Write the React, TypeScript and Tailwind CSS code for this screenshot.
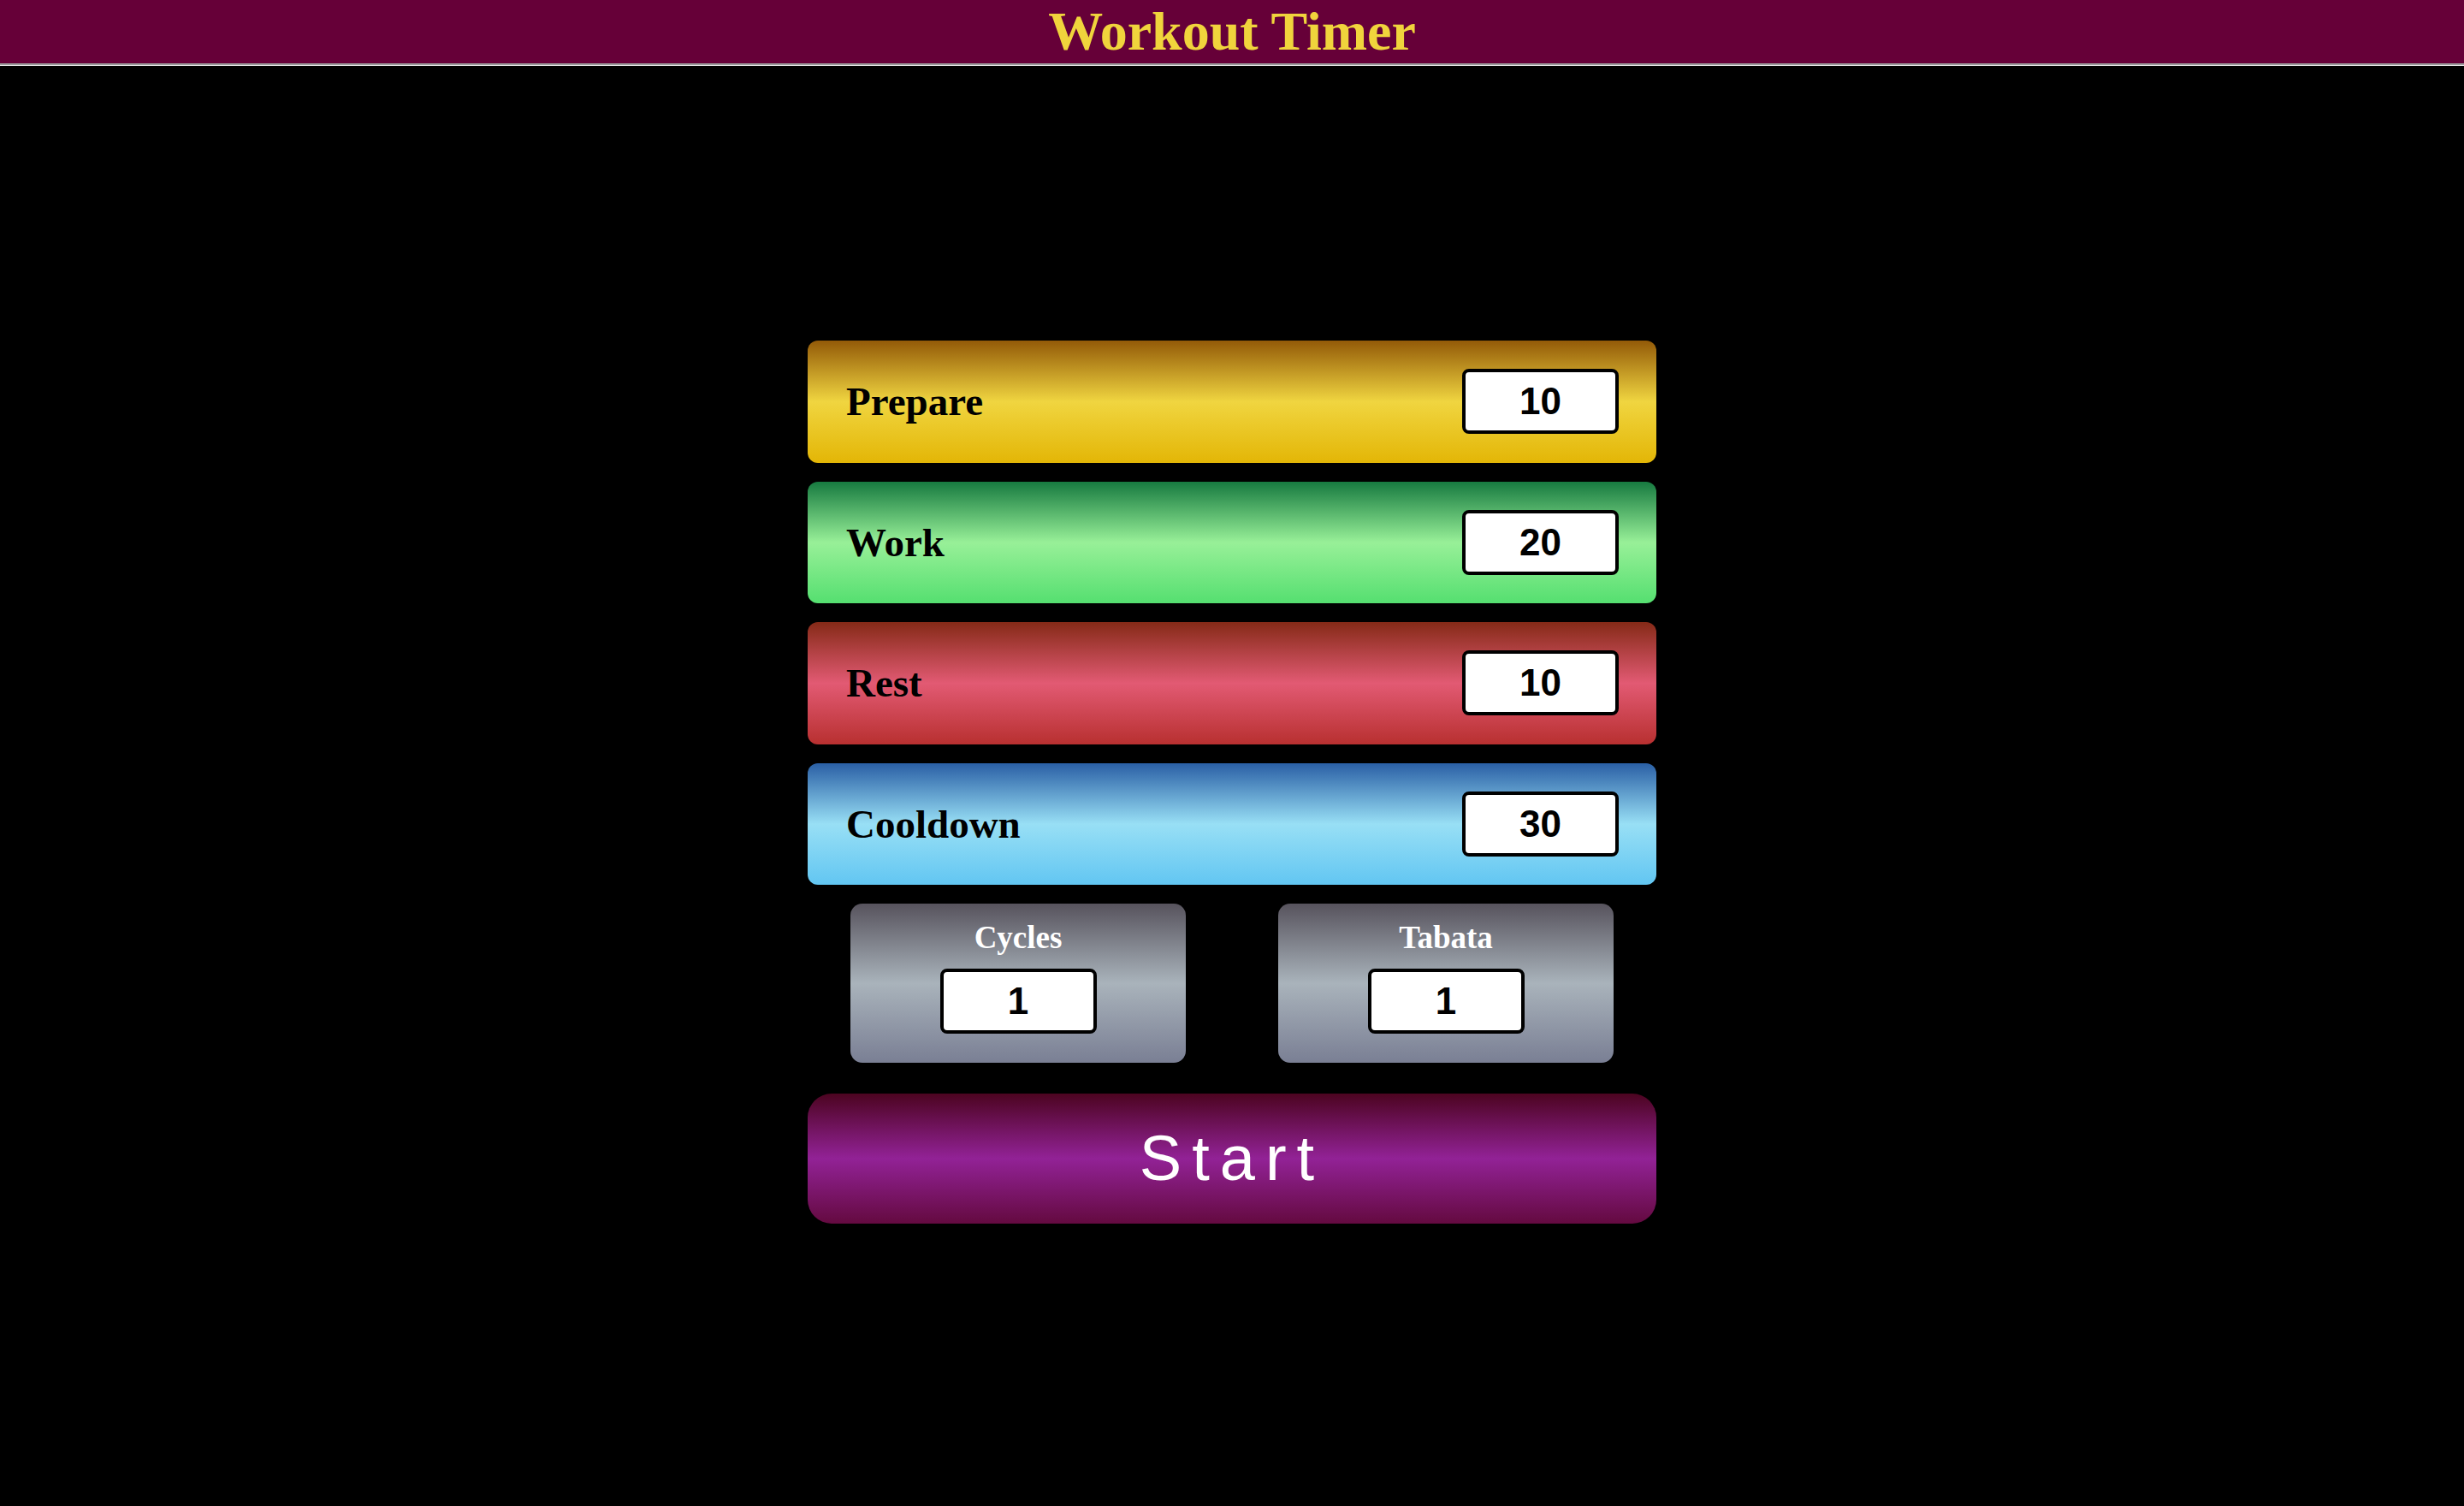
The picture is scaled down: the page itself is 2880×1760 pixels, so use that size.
import React, { useState } from "react";

const rows = [
  { label: "Prepare", value: "10", bg: "bg-[linear-gradient(to_bottom,#935a08_0%,#f0d540_50%,#e3b606_100%)]" },
  { label: "Work", value: "20", bg: "bg-[linear-gradient(to_bottom,#177a40_0%,#98f098_50%,#55df70_100%)]" },
  { label: "Rest", value: "10", bg: "bg-[linear-gradient(to_bottom,#852a17_0%,#e25a73_50%,#b83030_100%)]" },
  { label: "Cooldown", value: "30", bg: "bg-[linear-gradient(to_bottom,#2a5fa5_0%,#98dff5_50%,#62c6f2_100%)]" },
];

function NumberBox({ initial }: { initial: string }) {
  const [value, setValue] = useState(initial);
  return (
    <input
      type="text"
      value={value}
      onChange={(e) => setValue(e.target.value)}
      className="w-[183px] h-[76px] rounded-[8px] border-4 border-black bg-white text-center text-[44px] leading-none font-bold text-black outline-none font-['Liberation_Sans',Arial,sans-serif]"
    />
  );
}

export default function App() {
  return (
    <div className="min-h-screen bg-black">
      {/* Header */}
      <header className="h-[74px] bg-[#660038] flex items-start justify-center">
        <h1 className="m-0 text-[64px] leading-[74px] font-bold text-[#f0d43c] font-['Liberation_Serif','Times_New_Roman',serif]">
          Workout Timer
        </h1>
      </header>
      <div className="h-[2px] bg-[#9a9a9a]" />
      <div className="h-[1px] bg-[#eeeeee]" />

      {/* Settings */}
      <main className="flex flex-col items-center pt-[321px]">
        <div className="w-[992px] flex flex-col gap-[22px]">
          {rows.map((row) => (
            <div
              key={row.label}
              className={`h-[142.5px] rounded-[12px] pl-[45px] pr-[44px] flex items-center justify-between ${row.bg}`}
            >
              <span className="text-[47px] leading-[1.15] font-bold text-black font-['Liberation_Serif','Times_New_Roman',serif]">
                {row.label}
              </span>
              <NumberBox initial={row.value} />
            </div>
          ))}

          <div className="flex justify-between px-[50px]">
            {["Cycles", "Tabata"].map((name) => (
              <div
                key={name}
                className="w-[392px] h-[186px] rounded-[14px] pt-[19px] flex flex-col items-center bg-[linear-gradient(to_bottom,#57535d_0%,#a9b3bb_50%,#7a7f94_100%)]"
              >
                <span className="text-[37px] leading-[42px] font-bold text-white font-['Liberation_Serif','Times_New_Roman',serif]">
                  {name}
                </span>
                <div className="mt-[15px]">
                  <NumberBox initial="1" />
                </div>
              </div>
            ))}
          </div>

          <button className="mt-[14px] h-[152px] rounded-[28px] text-white text-[74px] leading-none tracking-[12px] font-['Liberation_Sans',Arial,sans-serif] bg-[linear-gradient(to_bottom,#4c0420_0%,#922296_50%,#640a40_100%)]">
            Start
          </button>
        </div>
      </main>
    </div>
  );
}
